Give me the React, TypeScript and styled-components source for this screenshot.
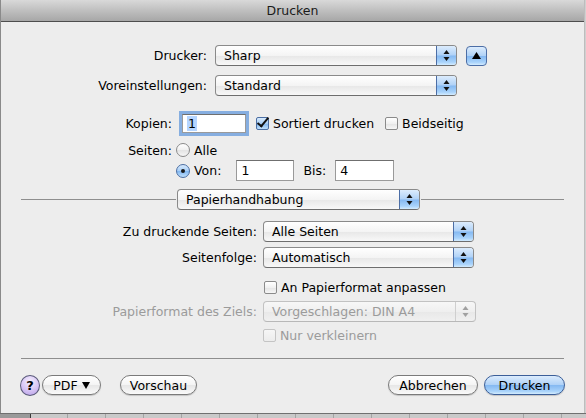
import React from 'react';
import styled, { createGlobalStyle, css } from 'styled-components';

const GlobalStyle = createGlobalStyle`
  html, body {
    margin: 0;
    padding: 0;
    background: #9e9e9e;
  }
  body {
    font-family: "DejaVu Sans", "Liberation Sans", sans-serif;
    font-size: 12.5px;
    color: #000;
  }
`;

const aqua = css`
  background: linear-gradient(#dcecfd 0%, #b0d2f7 48%, #85b9f2 52%, #a9d3fb 85%, #d3ecff 100%);
`;

const App = () => {
  return (
    <>
      <GlobalStyle />
      <Screen>
        <Dialog>
          <TitleBar>Drucken</TitleBar>
          <Body>
            <Row $mt={23}>
              <Label $w={187}>Drucker:</Label>
              <Popup $w={242}>
                <PopupText>Sharp</PopupText>
                <Arrows />
              </Popup>
              <DisclosureButton>
                <svg width="9" height="7" viewBox="0 0 9 7">
                  <path d="M4.5 0 L9 7 L0 7 Z" fill="#000" />
                </svg>
              </DisclosureButton>
            </Row>
            <Row $mt={9}>
              <Label $w={187}>Voreinstellungen:</Label>
              <Popup $w={242}>
                <PopupText>Standard</PopupText>
                <Arrows />
              </Popup>
            </Row>

            <Row $mt={17}>
              <Label $w={152} $gap={7}>Kopien:</Label>
              <TextField $w={64} $focused>
                <Selected>1</Selected>
              </TextField>
              <Check $checked $ml={10} />
              <Caption>Sortiert drucken</Caption>
              <Check $ml={11} />
              <Caption>Beidseitig</Caption>
            </Row>
            <Row $mt={7} $h={18}>
              <Label $w={152} $gap={4}>Seiten:</Label>
              <Radio />
              <Caption>Alle</Caption>
            </Row>
            <Row $mt={1} $h={21}>
              <Spacer $w={156} />
              <Radio $on />
              <Caption>Von:</Caption>
              <TextField $w={58} $ml={15}>1</TextField>
              <Caption $ml={9}>Bis:</Caption>
              <TextField $w={59} $ml={9}>4</TextField>
            </Row>

            <SectionBar>
              <Rule $w={155} />
              <Popup $w={243}>
                <PopupText>Papierhandhabung</PopupText>
                <Arrows />
              </Popup>
              <Rule />
            </SectionBar>

            <Row $mt={11}>
              <Label $w={237} $gap={6}>Zu druckende Seiten:</Label>
              <Popup $w={211}>
                <PopupText>Alle Seiten</PopupText>
                <Arrows />
              </Popup>
            </Row>
            <Row $mt={5}>
              <Label $w={237} $gap={6}>Seitenfolge:</Label>
              <Popup $w={211}>
                <PopupText>Automatisch</PopupText>
                <Arrows />
              </Popup>
            </Row>
            <Row $mt={12} $h={14}>
              <Spacer $w={244} />
              <Check />
              <Caption>An Papierformat anpassen</Caption>
            </Row>
            <Row $mt={7}>
              <Label $w={237} $gap={6} $disabled>Papierformat des Ziels:</Label>
              <Popup $w={213} $disabled>
                <PopupText>Vorgeschlagen: DIN A4</PopupText>
                <Arrows disabled />
              </Popup>
            </Row>
            <Row $mt={6} $h={14}>
              <Spacer $w={243} />
              <Check $disabled />
              <Caption $disabled>Nur verkleinern</Caption>
            </Row>

            <Divider />

            <ButtonBar>
              <HelpButton>?</HelpButton>
              <PushButton $w={59} $ml={2}>
                PDF
                <svg width="8" height="7" viewBox="0 0 8 7">
                  <path d="M0 0 L8 0 L4 7 Z" fill="#000" />
                </svg>
              </PushButton>
              <PushButton $w={77} $ml={19}>Vorschau</PushButton>
              <Fill />
              <PushButton $w={90}>Abbrechen</PushButton>
              <PushButton $w={81} $ml={6} $default>Drucken</PushButton>
            </ButtonBar>
          </Body>
        </Dialog>
        <SheetStrip />
      </Screen>
    </>
  );
};

// Up/down arrow cap at the right end of a popup
const Arrows = ({ disabled }: { disabled?: boolean }) => (
  <ArrowCap $disabled={disabled}>
    <svg width="7" height="13" viewBox="0 0 7 13">
      <path d="M3.5 1 L6.5 5 L0.5 5 Z" fill={disabled ? '#a0a0a0' : '#111'} />
      <path d="M3.5 12 L6.5 8 L0.5 8 Z" fill={disabled ? '#a0a0a0' : '#111'} />
    </svg>
  </ArrowCap>
);

export default App;

const Screen = styled.div`
  width: 586px;
  height: 418px;
  display: flex;
  flex-direction: column;
  background: linear-gradient(90deg, #8a8a8a 0 1px, #d6d6d6 1px 584px, #bdbdbd 584px 585px, #d0d0d0 585px);
  overflow: hidden;
`;

const Dialog = styled.div`
  width: 583px;
  height: 413px;
  margin-left: 1px;
  display: flex;
  flex-direction: column;
  background: #ededed;
  flex-shrink: 0;
`;

const TitleBar = styled.div`
  height: 21px;
  border-bottom: 1px solid #4e4e4e;
  background: linear-gradient(#d9d9d9, #bfbfbf 50%, #a7a7a7);
  display: flex;
  align-items: center;
  justify-content: center;
  font-size: 12.5px;
  color: #1a1a1a;
`;

const Body = styled.div`
  flex: 1;
  display: flex;
  flex-direction: column;
  padding: 0 19px;
`;

const Row = styled.div<{ $mt?: number; $h?: number }>`
  display: flex;
  align-items: center;
  height: ${(p) => p.$h ?? 21}px;
  margin-top: ${(p) => p.$mt ?? 0}px;
`;

const Label = styled.span<{ $w: number; $gap?: number; $disabled?: boolean }>`
  width: ${(p) => p.$w}px;
  margin-right: ${(p) => p.$gap ?? 8}px;
  text-align: right;
  white-space: nowrap;
  color: ${(p) => (p.$disabled ? '#9b9b9b' : '#000')};
`;

const Spacer = styled.span<{ $w: number }>`
  width: ${(p) => p.$w}px;
  flex-shrink: 0;
`;

const Fill = styled.span`
  flex: 1;
`;

const Caption = styled.span<{ $ml?: number; $disabled?: boolean }>`
  margin-left: ${(p) => p.$ml ?? 4}px;
  white-space: nowrap;
  color: ${(p) => (p.$disabled ? '#9b9b9b' : '#000')};
`;

const Popup = styled.div<{ $w: number; $disabled?: boolean }>`
  width: ${(p) => p.$w}px;
  height: 21px;
  box-sizing: border-box;
  display: flex;
  align-items: center;
  border: 1px solid ${(p) => (p.$disabled ? '#c2c2c2' : '#8a8a8a')};
  border-bottom-color: ${(p) => (p.$disabled ? '#b8b8b8' : '#6e6e6e')};
  border-radius: 4px;
  overflow: hidden;
  background: ${(p) =>
    p.$disabled
      ? 'linear-gradient(#f7f7f7, #efefef 50%, #e8e8e8 51%, #f0f0f0)'
      : 'linear-gradient(#ffffff, #f4f4f4 50%, #e7e7e7 51%, #f8f8f8)'};
  color: ${(p) => (p.$disabled ? '#9b9b9b' : '#000')};
  flex-shrink: 0;
`;

const PopupText = styled.span`
  flex: 1;
  padding-left: 8px;
  white-space: nowrap;
`;

const ArrowCap = styled.span<{ $disabled?: boolean }>`
  width: 19px;
  align-self: stretch;
  display: flex;
  align-items: center;
  justify-content: center;
  border-left: 1px solid ${(p) => (p.$disabled ? '#cfcfcf' : '#4c6ea6')};
  ${(p) => (p.$disabled ? 'background: transparent;' : aqua)}
`;

const DisclosureButton = styled.div`
  width: 21px;
  height: 20px;
  box-sizing: border-box;
  margin-left: 9px;
  border: 1px solid #4c6ea6;
  border-radius: 4px;
  display: flex;
  align-items: center;
  justify-content: center;
  ${aqua}
`;

const TextField = styled.div<{ $w: number; $ml?: number; $focused?: boolean }>`
  width: ${(p) => p.$w}px;
  height: ${(p) => (p.$focused ? 19 : 21)}px;
  box-sizing: border-box;
  margin-left: ${(p) => p.$ml ?? (p.$focused ? 3 : 0)}px;
  background: #fff;
  border: 1px solid #9a9a9a;
  border-top-color: #6f6f6f;
  padding-left: 4px;
  display: flex;
  align-items: center;
  box-shadow: ${(p) => (p.$focused ? '0 0 0 3px #86aee0' : 'none')};
`;

const Selected = styled.span`
  background: #b5d5ff;
  padding: 0 1px;
`;

const Check = styled.span<{ $checked?: boolean; $disabled?: boolean; $ml?: number }>`
  width: 13px;
  height: 13px;
  box-sizing: border-box;
  margin-left: ${(p) => p.$ml ?? 0}px;
  border: 1px solid ${(p) => (p.$disabled ? '#c4c4c4' : p.$checked ? '#4b6ea3' : '#8a8a8a')};
  border-radius: 2px;
  position: relative;
  flex-shrink: 0;
  background: ${(p) =>
    p.$checked
      ? 'linear-gradient(#d9ebfd, #a6cdf6 50%, #7fb5f0 51%, #bfe0fc)'
      : p.$disabled
        ? 'linear-gradient(#f6f6f6, #ececec)'
        : 'linear-gradient(#ffffff, #f0f0f0 50%, #e3e3e3 51%, #f6f6f6)'};

  &::after {
    content: ${(p) => (p.$checked ? "''" : 'none')};
    position: absolute;
    left: 3px;
    top: -3px;
    width: 4px;
    height: 10px;
    border: solid #111;
    border-width: 0 2.5px 2.5px 0;
    transform: rotate(40deg);
  }
`;

const Radio = styled.span<{ $on?: boolean }>`
  width: 14px;
  height: 14px;
  box-sizing: border-box;
  border-radius: 50%;
  border: 1px solid ${(p) => (p.$on ? '#4b6ea3' : '#8a8a8a')};
  flex-shrink: 0;
  display: flex;
  align-items: center;
  justify-content: center;
  background: ${(p) =>
    p.$on
      ? 'linear-gradient(#d9ebfd, #a6cdf6 50%, #7fb5f0 51%, #bfe0fc)'
      : 'linear-gradient(#ffffff, #f0f0f0 50%, #e3e3e3 51%, #f6f6f6)'};

  &::after {
    content: ${(p) => (p.$on ? "''" : 'none')};
    width: 4px;
    height: 4px;
    border-radius: 50%;
    background: #1a1a1a;
  }
`;

const SectionBar = styled.div`
  display: flex;
  align-items: center;
  margin-top: 8px;
  height: 21px;
`;

// A fixed width keeps the section popup where it sits; without one the rule stretches
const Rule = styled.div<{ $w?: number }>`
  flex: ${(p) => (p.$w ? `0 0 ${p.$w}px` : '1')};
  height: 1px;
  background: #8e8e8e;
  margin: 0 1px;
`;

const Divider = styled.div`
  height: 1px;
  background: #8e8e8e;
  margin: 16px 1px 0;
`;

const ButtonBar = styled.div`
  display: flex;
  align-items: center;
  height: 22px;
  margin-top: 15px;
`;

const HelpButton = styled.div`
  width: 20px;
  height: 21px;
  box-sizing: border-box;
  border-radius: 50%;
  border: 1px solid #5a5a7a;
  background: radial-gradient(circle at 50% 30%, #f6f0ff, #d6c4f4 55%, #b49ce6);
  display: flex;
  align-items: center;
  justify-content: center;
  font-weight: bold;
  font-size: 13px;
  flex-shrink: 0;
`;

const PushButton = styled.div<{ $w: number; $ml?: number; $default?: boolean }>`
  width: ${(p) => p.$w}px;
  height: 20px;
  box-sizing: border-box;
  margin-left: ${(p) => p.$ml ?? 0}px;
  border-radius: 10px;
  border: 1px solid ${(p) => (p.$default ? '#3c5f99' : '#7a7a7a')};
  display: flex;
  align-items: center;
  justify-content: center;
  gap: 4px;
  flex-shrink: 0;
  box-shadow: 0 1px 1px rgba(0, 0, 0, 0.18);
  ${(p) => (p.$default ? aqua : 'background: linear-gradient(#ffffff, #f4f4f4 50%, #e6e6e6 51%, #fafafa);')}
`;

const SheetStrip = styled.div`
  flex: 1;
  border-top: 1px solid #707070;
  background:
    linear-gradient(90deg, #9a9a9a 0 30px, #3a3a3a 30px 31px, transparent 31px),
    repeating-linear-gradient(90deg, #c9c9c9 0 37px, #a4a4a4 37px 38px);
  background-position: 0 0, 30px 0;
`;
